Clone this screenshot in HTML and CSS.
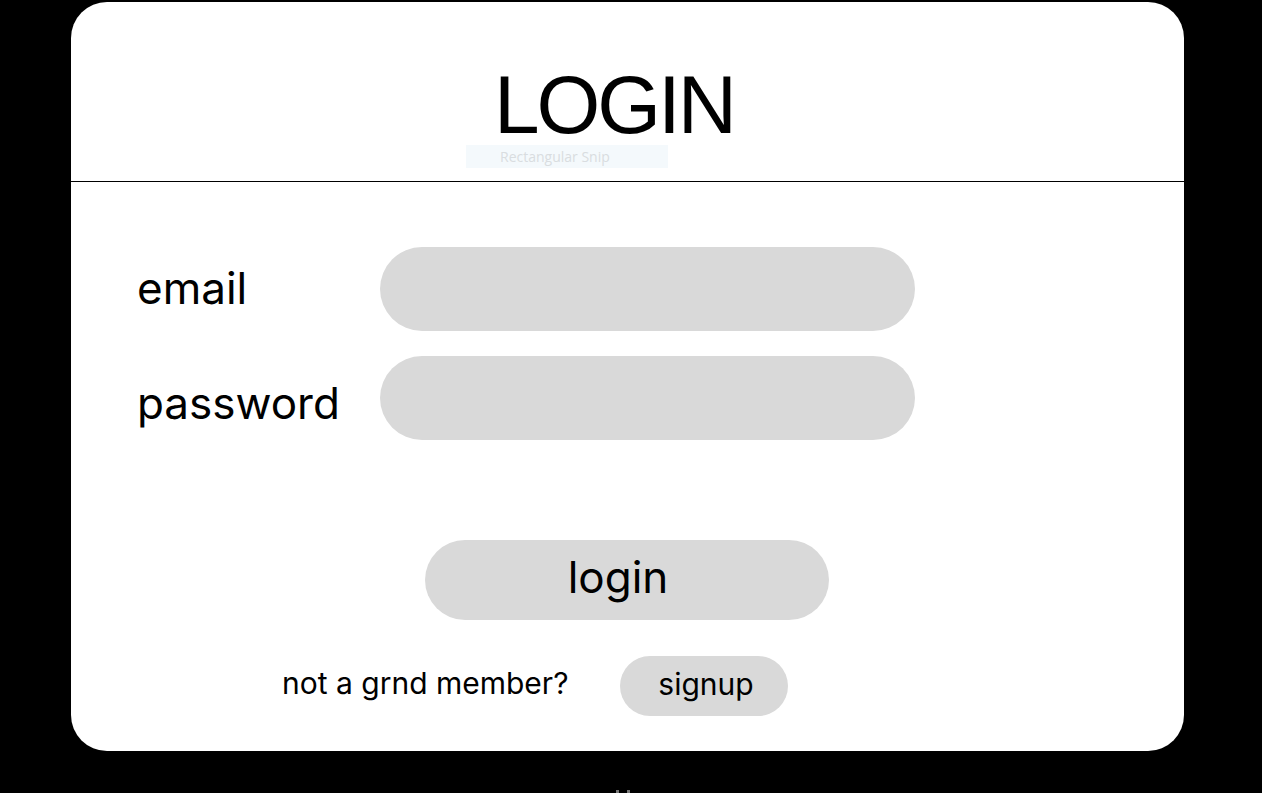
FILE: index.html
```html
<!DOCTYPE html>
<html>
<head>
<meta charset="utf-8">
<link rel="stylesheet" href="styles.css">
</head>
<body>
<div class="card">
  <header class="head">
    <h1 class="title">LOGIN</h1>
    <div class="snip">Rectangular Snip</div>
  </header>
  <main class="body">
    <div class="fields">
      <div class="row"><label class="label">email</label><div class="input"></div></div>
      <div class="row"><label class="label">password</label><div class="input"></div></div>
    </div>
    <div class="actions">
      <button class="btn-login">login</button>
    </div>
    <div class="signup-row">
      <span class="note">not a grnd member?</span>
      <button class="btn-signup">signup</button>
    </div>
  </main>
</div>
<div class="marks"><span></span><span></span></div>
</body>
</html>
```
FILE: styles.css
```css
html, body { margin: 0; padding: 0; background: #000; }
body { width: 1262px; height: 793px; overflow: hidden; position: relative; font-family: Inter, "Noto Sans", sans-serif; color: #000; }
.card {
  margin: 2px 0 0 71px;
  width: 1113px;
  height: 749px;
  background: #fff;
  border-radius: 36px;
  display: flex;
  flex-direction: column;
}
.head {
  position: relative;
  height: 179px;
  border-bottom: 1px solid #000;
  display: flex;
  justify-content: center;
}
.title {
  margin: 68px 27px 0 0;
  font-family: "Liberation Sans", Arial, sans-serif;
  font-weight: 400;
  font-size: 82px;
  letter-spacing: -3px;
  line-height: 70px;
  height: 70px;
}
.snip {
  position: absolute;
  left: 395px;
  top: 143px;
  width: 202px;
  height: 23px;
  background: #f4f9fc;
  color: #d9dde0;
  font-family: "Open Sans", sans-serif;
  font-size: 14px;
  line-height: 24px;
  padding-left: 34px;
  box-sizing: border-box;
}
.body { padding: 65px 0 0 66px; display: flex; flex-direction: column; }
.fields { display: flex; flex-direction: column; gap: 25px; }
.row { display: flex; align-items: center; }
.label { width: 243px; font-size: 44px; line-height: 50px; }
.row:first-child .label { margin-top: -2px; }
.row:nth-child(2) .label { margin-top: 10px; }
.input { width: 535px; height: 84px; border-radius: 42px; background: #d9d9d9; }
.actions { display: flex; padding: 100px 0 0 288px; }
.btn-login {
  width: 404px; height: 80px; border: 0; border-radius: 40px; background: #d9d9d9;
  font-family: Inter, sans-serif; font-size: 44px; color: #000; padding: 0 18px 6px 0;
}
.signup-row { display: flex; align-items: center; padding: 36px 0 0 145px; }
.note { font-size: 30px; width: 338px; margin-top: -6px; }
.btn-signup {
  width: 168px; height: 60px; border: 0; border-radius: 30px; background: #d9d9d9;
  font-family: Inter, sans-serif; font-size: 30px; color: #000; padding: 0 0 5px 4px;
}
.marks { position: absolute; left: 616px; top: 790px; display: flex; gap: 8px; }
.marks span { width: 3px; height: 3px; background: #777; }
```
